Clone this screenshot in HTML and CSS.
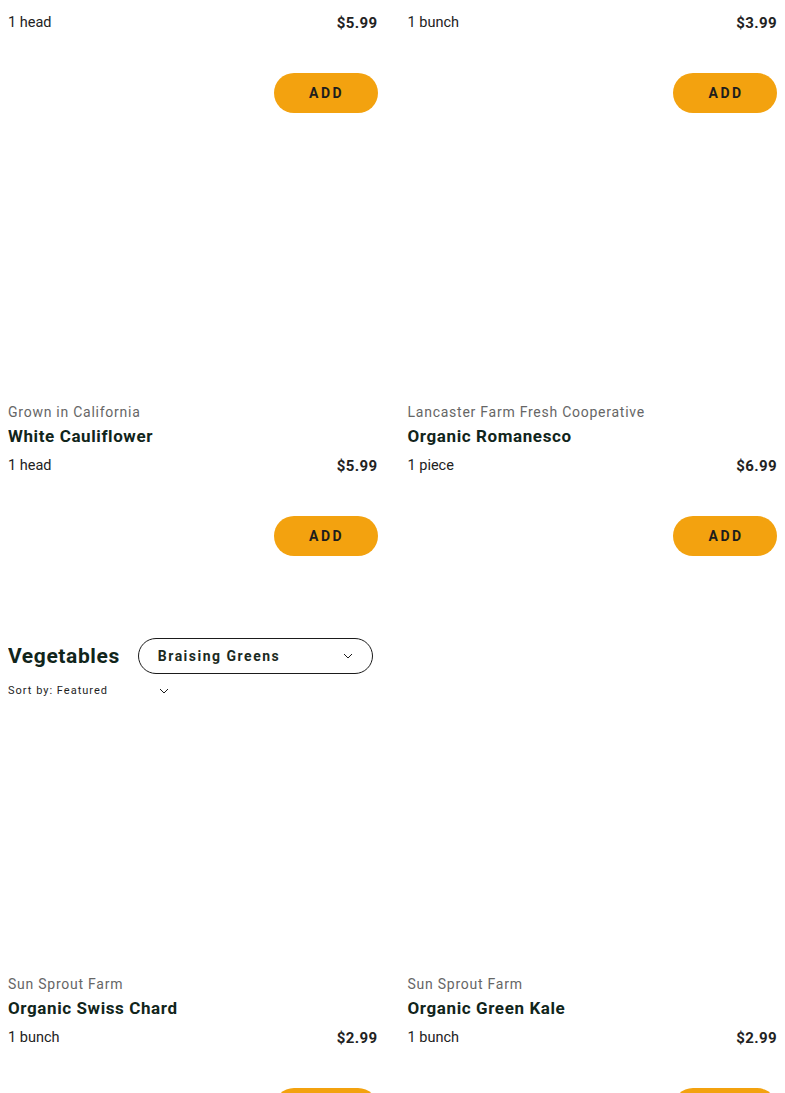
FILE: index.html
```html
<!DOCTYPE html>
<html lang="en">
<head>
<meta charset="utf-8">
<title>Vegetables</title>
<link rel="stylesheet" href="styles.css">
</head>
<body>
<div class="page">
  <section class="grid">
    <article class="card">
      <div class="card-img"></div>
      <div class="farm">Sun Sprout Farm</div>
      <h3 class="name">Organic Broccoli</h3>
      <div class="meta"><span>1 head</span><span class="price">$5.99</span></div>
      <button class="add">ADD</button>
    </article>
    <article class="card">
      <div class="card-img"></div>
      <div class="farm">Sun Sprout Farm</div>
      <h3 class="name">Organic Broccolini</h3>
      <div class="meta"><span>1 bunch</span><span class="price">$3.99</span></div>
      <button class="add">ADD</button>
    </article>
    <article class="card">
      <div class="card-img"></div>
      <div class="farm">Grown in California</div>
      <h3 class="name">White Cauliflower</h3>
      <div class="meta"><span>1 head</span><span class="price">$5.99</span></div>
      <button class="add">ADD</button>
    </article>
    <article class="card">
      <div class="card-img"></div>
      <div class="farm">Lancaster Farm Fresh Cooperative</div>
      <h3 class="name">Organic Romanesco</h3>
      <div class="meta"><span>1 piece</span><span class="price">$6.99</span></div>
      <button class="add">ADD</button>
    </article>
  </section>

  <section class="category">
    <div class="cat-head">
      <h2 class="cat-title">Vegetables</h2>
      <div class="select">
        <span>Braising Greens</span>
        <svg class="chev" width="10" height="6" viewBox="0 0 10 6"><path d="M1 1l4 4 4-4" fill="none" stroke="#1b1b1b" stroke-width="1"/></svg>
      </div>
    </div>
    <div class="sort">
      <span>Sort by: Featured</span>
      <svg class="chev" width="10" height="6" viewBox="0 0 10 6"><path d="M1 1l4 4 4-4" fill="none" stroke="#1b1b1b" stroke-width="1"/></svg>
    </div>
    <div class="grid">
      <article class="card">
        <div class="card-img"></div>
        <div class="farm">Sun Sprout Farm</div>
        <h3 class="name">Organic Swiss Chard</h3>
        <div class="meta"><span>1 bunch</span><span class="price">$2.99</span></div>
        <button class="add">ADD</button>
      </article>
      <article class="card">
        <div class="card-img"></div>
        <div class="farm">Sun Sprout Farm</div>
        <h3 class="name">Organic Green Kale</h3>
        <div class="meta"><span>1 bunch</span><span class="price">$2.99</span></div>
        <button class="add">ADD</button>
      </article>
    </div>
  </section>
</div>
</body>
</html>
```

FILE: styles.css
```css
* { box-sizing: border-box; }
html, body { overflow: hidden; }
body {
  margin: 8px;
  background: #fff;
  font-family: Roboto, "Liberation Sans", sans-serif;
  color: #1e1e1e;
}
.page {
  margin-top: -306px;
}
.grid {
  display: grid;
  grid-template-columns: 1fr 1fr;
  column-gap: 30px;
  row-gap: 32px;
}
.card {
  display: flex;
  flex-direction: column;
}
.card-img {
  height: 255px;
}
.farm {
  font-size: 14px;
  line-height: 24px;
  color: #666;
  letter-spacing: 0.75px;
}
.name {
  margin: 0;
  font-size: 17px;
  line-height: 24px;
  font-weight: 700;
  color: #11251b;
  letter-spacing: 0.6px;
}
.meta {
  margin-top: 6px;
  display: flex;
  justify-content: space-between;
  font-size: 14.5px;
  line-height: 24px;
  color: #222;
}
.price {
  font-weight: 700;
  font-size: 15px;
  letter-spacing: 0.4px;
}
.add {
  align-self: flex-end;
  margin-top: 38px;
  width: 104px;
  height: 40px;
  border: 0;
  border-radius: 20px;
  background: #f3a20f;
  color: #1d1d1d;
  font-family: inherit;
  font-size: 14px;
  font-weight: 700;
  letter-spacing: 2.4px;
  padding: 0 0 0 2px;
}
.category {
  margin-top: 82px;
}
.cat-head {
  display: flex;
  align-items: center;
  gap: 18px;
  height: 36px;
}
.cat-title {
  margin: 0;
  font-size: 21px;
  font-weight: 700;
  color: #11251b;
  letter-spacing: 0.6px;
}
.select {
  width: 235px;
  height: 36px;
  border: 1.5px solid #1b1b1b;
  border-radius: 18px;
  display: flex;
  align-items: center;
  justify-content: space-between;
  padding: 0 19px 0 19px;
  font-size: 14px;
  font-weight: 700;
  letter-spacing: 1.5px;
  color: #1b2a22;
}
.chev { display: block; }
.sort {
  margin-top: 9px;
  display: flex;
  align-items: center;
  width: 161px;
  justify-content: space-between;
  font-size: 11px;
  line-height: 16px;
  letter-spacing: 1px;
  color: #1e1e1e;
}
.sort + .grid {
  margin-top: 18px;
}
```
